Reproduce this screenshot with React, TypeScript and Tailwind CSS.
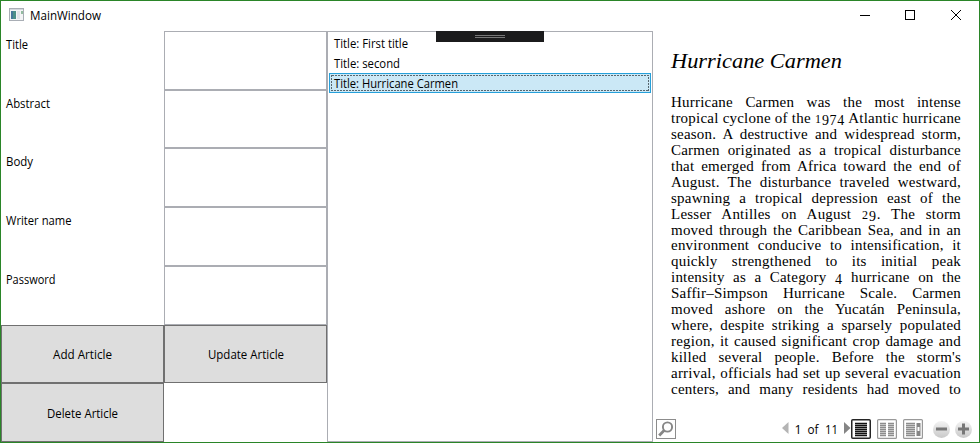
import React from "react";

const ui = "font-['Open_Sans','Noto_Sans',sans-serif] text-black";
const serif = "font-['Liberation_Serif',serif] text-black";

const fields = [
  { label: "Title", height: "h-[59px]", w: 22 },
  { label: "Abstract", height: "h-[58px]", w: 44 },
  { label: "Body", height: "h-[59px]", w: 27 },
  { label: "Writer name", height: "h-[59px]", w: 65.5 },
  { label: "Password", height: "h-[59px]", w: 49.5 },
];

const lines = [
  "Hurricane Carmen was the most intense",
  "tropical cyclone of the 1974 Atlantic hurricane",
  "season. A destructive and widespread storm,",
  "Carmen originated as a tropical disturbance",
  "that emerged from Africa toward the end of",
  "August. The disturbance traveled westward,",
  "spawning a tropical depression east of the",
  "Lesser Antilles on August 29. The storm",
  "moved through the Caribbean Sea, and in an",
  "environment conducive to intensification, it",
  "quickly strengthened to its initial peak",
  "intensity as a Category 4 hurricane on the",
  "Saffir–Simpson Hurricane Scale. Carmen",
  "moved ashore on the Yucatán Peninsula,",
  "where, despite striking a sparsely populated",
  "region, it caused significant crop damage and",
  "killed several people. Before the storm's",
  "arrival, officials had set up several evacuation",
  "centers, and many residents had moved to",
];

// Old-style figures: 0-2 sit at x-height, the others descend.
function OldStyle({ text }: { text: string }) {
  return (
    <>
      {text.split(/([012]+|[3-9]+)/).map((part, i) =>
        /^[012]+$/.test(part) ? (
          <span key={i} className="text-[12px] leading-none tracking-[1px]">{part}</span>
        ) : /^\d+$/.test(part) ? (
          <span key={i} className="align-[-2px] text-[14px] leading-none tracking-[0.7px]">{part}</span>
        ) : (
          part
        ),
      )}
    </>
  );
}

// Single-line label whose glyph run is fitted to a fixed width.
function Label({ text, w, size = 12 }: { text: string; w: number; size?: number }) {
  return (
    <svg width={w} height="16" className="block shrink-0 overflow-visible">
      <text x="0" y="12" fontSize={size} textLength={w} lengthAdjust="spacingAndGlyphs" fill="#000">
        {text}
      </text>
    </svg>
  );
}

function TitleBar() {
  return (
    <header className="flex h-[30px] shrink-0 items-start">
      <svg width="16" height="14" viewBox="0 0 16 14" className="mt-[7px] ml-2 block">
        <rect x="0.5" y="0.5" width="14" height="12" fill="#f4f4f6" stroke="#a9aeb5" />
        <rect x="1" y="1" width="13" height="1" fill="#d4d8de" />
        <rect x="2" y="3" width="5" height="8" fill="#4d8f88" />
        <rect x="2" y="3" width="2" height="8" fill="#46769a" />
        <rect x="8" y="3" width="3" height="8" fill="#e2e3e8" />
        <rect x="12" y="3" width="2" height="3" fill="#93bba0" />
      </svg>
      <div className="mt-[7px] ml-[5px]"><Label text="MainWindow" w={71} /></div>
      <svg width="103" height="12" viewBox="0 0 103 12" className="mt-2 mr-[17px] ml-auto block" stroke="#000" fill="none">
        <path d="M1 6.5H11" shapeRendering="crispEdges" />
        <rect x="46.5" y="1.5" width="9" height="9" shapeRendering="crispEdges" />
        <path d="M92 1L102 11M102 1L92 11" />
      </svg>
    </header>
  );
}

function ArticleForm() {
  return (
    <section className="flex w-[326px] shrink-0 flex-col">
      {fields.map((f) => (
        <div key={f.label} className={"flex " + f.height}>
          <div className="w-[163px] pt-[6px] pl-[5px]"><Label text={f.label} w={f.w} /></div>
          <input className="w-[163px] border border-[#abadb3] bg-white outline-none" />
        </div>
      ))}
      <div className="grid h-[117px] grid-cols-2 grid-rows-[58px_59px]">
        <button className="flex items-center justify-center border border-[#707070] bg-[#dddddd] pt-[2px]"><Label text="Add Article" w={59} /></button>
        <button className="flex items-center justify-center border border-[#707070] bg-[#dddddd] pt-[2px]"><Label text="Update Article" w={76} /></button>
        <button className="flex items-center justify-center border border-[#707070] bg-[#dddddd] pt-[3px]"><Label text="Delete Article" w={71} /></button>
      </div>
    </section>
  );
}

function ArticleList() {
  return (
    <section className="relative w-[326px] shrink-0 border border-[#abadb3] p-px">
      <div className="h-5 pt-[3px] pl-[5px]"><Label text="Title: First title" w={74} /></div>
      <div className="h-5 pt-[3px] pl-[5px]"><Label text="Title: second" w={66} /></div>
      <div className="relative h-5 border border-[#26a0da] bg-[#cbe8f6] pt-[2px] pl-1">
        <Label text="Title: Hurricane Carmen" w={124} />
        <svg className="absolute top-px left-px" width="318" height="16">
          <rect x="0.5" y="0.5" width="317" height="15" fill="none" stroke="#57666e" strokeDasharray="2 1" shapeRendering="crispEdges" />
        </svg>
      </div>
      <div className="absolute -top-px left-[108px] flex h-[11px] w-[108px] flex-col items-center gap-px bg-[#1b1b1c] pt-1">
        <div className="h-px w-[30px] bg-[#777]" />
        <div className="h-px w-[30px] bg-[#777]" />
      </div>
    </section>
  );
}

function ViewerToolbar() {
  return (
    <footer className="mt-auto flex h-[23px] shrink-0 items-start pl-[3px]">
      <svg width="21" height="20" viewBox="0 0 21 20" className="block" fill="none">
        <rect x="0.5" y="0.5" width="19" height="19" stroke="#8c8c8c" />
        <circle cx="11.5" cy="8" r="4.6" stroke="#868686" strokeWidth="1.9" />
        <path d="M8.3 11.3L3.2 16.4" stroke="#868686" strokeWidth="2.8" />
      </svg>
      <svg width="7" height="12" viewBox="0 0 7 12" className="mt-[3px] ml-[105px] block"><path d="M6.5 0V12L0 6Z" fill="#b4b4b4" /></svg>
      <svg width="55" height="16" className="mt-[2px] block overflow-visible text-[12.5px]">
        <text x="5.5" y="13">1</text>
        <text x="18.5" y="13" textLength="11" lengthAdjust="spacingAndGlyphs">of</text>
        <text x="36" y="13" textLength="13" lengthAdjust="spacingAndGlyphs">11</text>
      </svg>
      <svg width="7" height="12" viewBox="0 0 7 12" className="mt-[3px] block"><path d="M0 0V12L6.5 6Z" fill="#858585" /></svg>
      <svg width="124" height="20" viewBox="0 0 124 20" className="block" fill="none">
        <defs>
          <linearGradient id="knob" x1="0" y1="0" x2="0" y2="1">
            <stop offset="0" stopColor="#f3f3f3" />
            <stop offset="1" stopColor="#c9c9c9" />
          </linearGradient>
        </defs>
        <rect x="0.75" y="0.75" width="18.5" height="18.5" rx="1" stroke="#252525" strokeWidth="1.5" />
        <path d="M4 4.5H16M4 6.5H16M4 8.5H16M4 10.5H16M4 12.5H16M4 14.5H16M4 16.5H16" stroke="#111" strokeWidth="1.4" />
        <rect x="26.6" y="0.6" width="18.8" height="18.8" rx="1" stroke="#999" strokeWidth="1.2" />
        <path d="M29 4.5H35M29 6.5H35M29 8.5H35M29 10.5H35M29 12.5H35M29 14.5H35M29 16.5H35M37 4.5H43M37 6.5H43M37 8.5H43M37 10.5H43M37 12.5H43M37 14.5H43M37 16.5H43" stroke="#8d8d8d" strokeWidth="1.3" />
        <rect x="52.6" y="0.6" width="18.8" height="18.8" rx="1" stroke="#999" strokeWidth="1.2" />
        <path d="M55 4.5H64M55 6.5H64M55 8.5H64M55 10.5H64M55 12.5H64M55 14.5H64M55 16.5H64" stroke="#8d8d8d" strokeWidth="1.3" />
        <rect x="65.5" y="4" width="4" height="13" fill="#858585" />
        <rect x="66.5" y="8" width="2" height="4" fill="#fff" />
        <circle cx="90.5" cy="10.5" r="8.5" fill="url(#knob)" />
        <path d="M85 10H96" stroke="#777" strokeWidth="3" />
        <circle cx="112.5" cy="10.5" r="8.5" fill="url(#knob)" />
        <path d="M107 10H118M112.5 4.5V15.5" stroke="#777" strokeWidth="3" />
      </svg>
    </footer>
  );
}

function DocumentViewer() {
  return (
    <section className="flex min-w-0 flex-1 flex-col">
      <div className="pt-[16px] pl-[18px]">
        <svg width="173" height="30" className="block overflow-visible font-['Liberation_Serif',serif]">
          <text x="0" y="21" fontSize="21" fontStyle="italic" textLength="171" lengthAdjust="spacingAndGlyphs">Hurricane Carmen</text>
        </svg>
      </div>
      <div className={"mt-[17px] ml-[18px] w-[290px] text-[15px] tracking-[0.22px] " + serif}>
        {lines.map((line) => (
          <p key={line} className="h-[15.95px] leading-[16px] whitespace-nowrap [text-align-last:justify]">
            <OldStyle text={line} />
          </p>
        ))}
      </div>
      <ViewerToolbar />
    </section>
  );
}

export default function App() {
  return (
    <div className={"flex h-[443px] w-[980px] flex-col overflow-hidden border border-[#2a8528] bg-white " + ui}>
      <TitleBar />
      <main className="flex min-h-0 flex-1">
        <ArticleForm />
        <ArticleList />
        <DocumentViewer />
      </main>
    </div>
  );
}
